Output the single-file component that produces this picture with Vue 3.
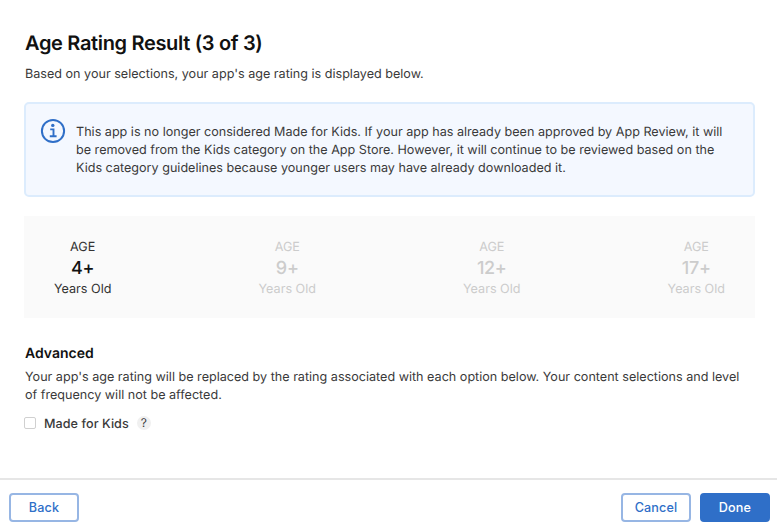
<script setup>
import { ref } from 'vue'

const ratings = [
  { age: '4+', active: true },
  { age: '9+', active: false },
  { age: '12+', active: false },
  { age: '17+', active: false }
]
const madeForKids = ref(false)
</script>

<template>
  <div class="modal">
    <main class="content">
      <h1>Age Rating Result (3 of 3)</h1>
      <p class="intro">Based on your selections, your app's age rating is displayed below.</p>

      <div class="notice">
        <svg class="info-icon" width="26" height="26" viewBox="0 0 26 26" fill="none">
          <circle cx="13" cy="13" r="11.1" stroke="#2f6fc8" stroke-width="2" />
          <circle cx="12.8" cy="7.4" r="1.7" fill="#2f6fc8" />
          <path d="M10.2 11.4h3.3v6.8M9.8 18.2h6.8" stroke="#2f6fc8" stroke-width="1.9" />
        </svg>
        <p>
          This app is no longer considered Made for Kids. If your app has already been approved by App Review, it will<br />
          be removed from the Kids category on the App Store. However, it will continue to be reviewed based on the<br />
          Kids category guidelines because younger users may have already downloaded it.
        </p>
      </div>

      <div class="ratings">
        <div v-for="r in ratings" :key="r.age" class="rating" :class="{ active: r.active }">
          <span>AGE</span>
          <span class="age">{{ r.age }}</span>
          <span>Years Old</span>
        </div>
      </div>

      <h2>Advanced</h2>
      <p class="advanced">
        Your app's age rating will be replaced by the rating associated with each option below. Your content selections and level<br />
        of frequency will not be affected.
      </p>
      <div class="option">
        <label>
          <input v-model="madeForKids" type="checkbox" />
          <span class="option-name">Made for Kids</span>
        </label>
        <span class="help">?</span>
      </div>
    </main>

    <footer>
      <button>Back</button>
      <div class="actions">
        <button>Cancel</button>
        <button class="primary">Done</button>
      </div>
    </footer>
  </div>
</template>

<style>
body { background: #fff; }
</style>

<style scoped>
.modal {
  display: flex;
  flex-direction: column;
  height: 530px;
  overflow: hidden;
  box-sizing: border-box;
  font-family: Inter, "Liberation Sans", sans-serif;
  font-size: 12.6px;
  letter-spacing: 0;
  line-height: 18px;
  color: #3a3a3a;
  text-rendering: geometricPrecision;
}
h1, h2, p { margin: 0; white-space: nowrap; }
.content { flex: 1; padding: 30px 22px 0 24px; }
h1 {
  padding-left: 1px;
  font-size: 20px;
  line-height: 26px;
  font-weight: 600;
  letter-spacing: -0.33px;
  color: #111;
}
.intro { margin-top: 10px; padding-left: 1px; }
.notice {
  display: flex;
  box-sizing: border-box;
  height: 95px;
  margin-top: 18px;
  padding: 14px 14px 0;
  gap: 10px;
  border: 2px solid #dcecfd;
  border-radius: 5px;
  background: #f4f8ff;
}
.info-icon { flex: none; }
.notice p { padding-top: 6px; }
.ratings {
  display: flex;
  justify-content: space-between;
  box-sizing: border-box;
  height: 102px;
  margin-top: 19px;
  padding: 23px 30px 0;
  background: #fafafa;
}
.rating { display: flex; flex-direction: column; align-items: center; color: #ccc; }
.age { font-size: 18px; line-height: 24px; font-weight: 500; letter-spacing: -0.3px; }
.rating.active { color: #333; }
.rating.active .age { color: #111; }
h2 { margin-top: 27px; padding-left: 1px; font-size: 14px; line-height: 18px; font-weight: 600; letter-spacing: 0; color: #111; }
.advanced { margin-top: 6px; padding-left: 1px; }
.option { display: flex; align-items: center; height: 18px; margin-top: 10px; }
.option label { display: flex; align-items: center; }
input {
  appearance: none;
  box-sizing: border-box;
  width: 12px;
  height: 12px;
  margin: 0 8px 2px 0;
  border: 1px solid #d0d0d0;
  border-radius: 2px;
  background: #fff;
}
.option-name { padding-top: 1px; font-weight: 500; letter-spacing: 0.06px; }
.help {
  width: 14px;
  height: 14px;
  margin: 0 0 2px 8px;
  border-radius: 50%;
  background: #f0f0f0;
  font-size: 12px;
  line-height: 14px;
  text-align: center;
}
footer {
  display: flex;
  justify-content: space-between;
  box-sizing: border-box;
  height: 52px;
  padding: 13px 7px 0 9px;
  border-top: 2px solid #e6e6e6;
}
.actions { display: flex; gap: 9px; }
button {
  box-sizing: border-box;
  width: 70px;
  height: 29px;
  padding: 1px 0 0;
  border: 2px solid #97b6e4;
  border-radius: 4px;
  background: #fff;
  color: #2f6fc8;
  font: 500 12.6px/18px Inter, "Liberation Sans", sans-serif;
  letter-spacing: 0.15px;
}
.primary { border-color: #2f6fc8; background: #2f6fc8; color: #fff; }
</style>
